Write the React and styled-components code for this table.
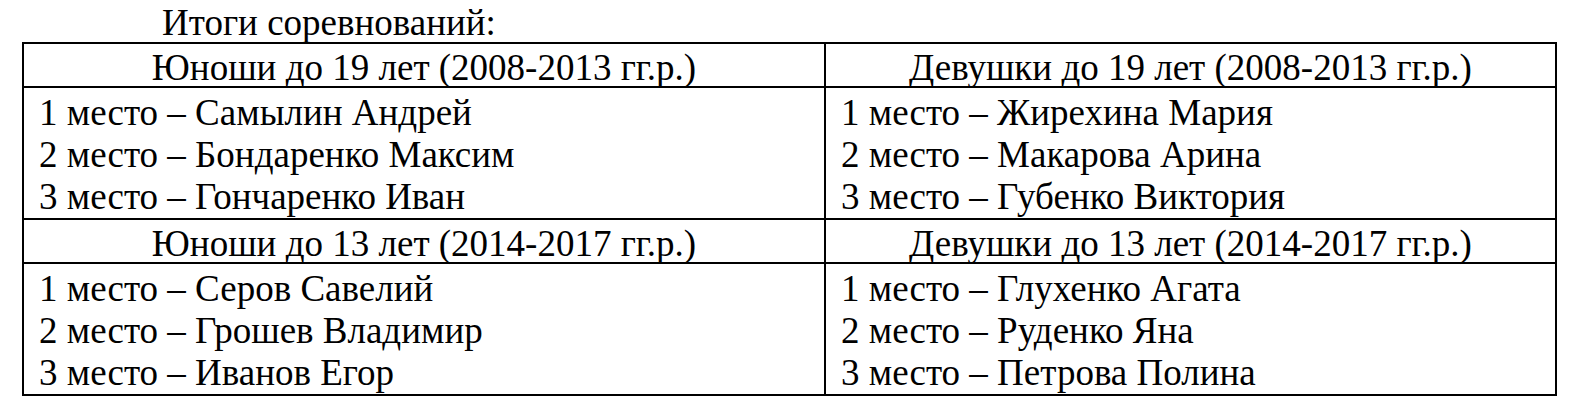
import React from 'react';
import styled, { createGlobalStyle } from 'styled-components';

const GlobalStyle = createGlobalStyle`
  body {
    margin: 0;
    background: #fff;
    color: #000;
    font-family: "Liberation Serif", "Times New Roman", serif;
    font-size: 37px;
    line-height: 42px;
  }
`;

const Page = styled.div`
  padding-left: 22px;
  font-family: "Liberation Serif", "Times New Roman", serif;
  font-size: 37px;
  line-height: 42px;
`;

const Title = styled.div`
  box-sizing: border-box;
  height: 42px;
  padding: 2px 0 0 140px;
`;

const Table = styled.table`
  border-collapse: collapse;
  width: 1535px;
  table-layout: fixed;
  font: inherit;
  line-height: inherit;

  col.left {
    width: 802px;
  }
`;

const HeadCell = styled.td`
  border: 2px solid #000;
  padding: 6px 0 0;
  line-height: 36px;
  text-align: center;
  vertical-align: top;
  white-space: nowrap;
`;

const BodyCell = styled.td`
  border: 2px solid #000;
  padding: 4px 0 0 15px;
  vertical-align: top;
  white-space: nowrap;
`;

const Line = styled.div`
  height: 42px;
`;

const groups = [
  {
    boys: 'Юноши до 19 лет (2008-2013 гг.р.)',
    girls: 'Девушки до 19 лет (2008-2013 гг.р.)',
    boysList: ['Самылин Андрей', 'Бондаренко Максим', 'Гончаренко Иван'],
    girlsList: ['Жирехина Мария', 'Макарова Арина', 'Губенко Виктория'],
  },
  {
    boys: 'Юноши до 13 лет (2014-2017 гг.р.)',
    girls: 'Девушки до 13 лет (2014-2017 гг.р.)',
    boysList: ['Серов Савелий', 'Грошев Владимир', 'Иванов Егор'],
    girlsList: ['Глухенко Агата', 'Руденко Яна', 'Петрова Полина'],
  },
];

const Places = ({ names }) => (
  <BodyCell>
    {names.map((name, i) => (
      <Line key={name}>{`${i + 1} место – ${name}`}</Line>
    ))}
  </BodyCell>
);

export default function App() {
  return (
    <Page>
      <GlobalStyle />
      <Title>Итоги соревнований:</Title>
      <Table>
        <colgroup>
          <col className="left" />
          <col />
        </colgroup>
        <tbody>
          {groups.map((g) => (
            <React.Fragment key={g.boys}>
              <tr>
                <HeadCell>{g.boys}</HeadCell>
                <HeadCell>{g.girls}</HeadCell>
              </tr>
              <tr>
                <Places names={g.boysList} />
                <Places names={g.girlsList} />
              </tr>
            </React.Fragment>
          ))}
        </tbody>
      </Table>
    </Page>
  );
}
